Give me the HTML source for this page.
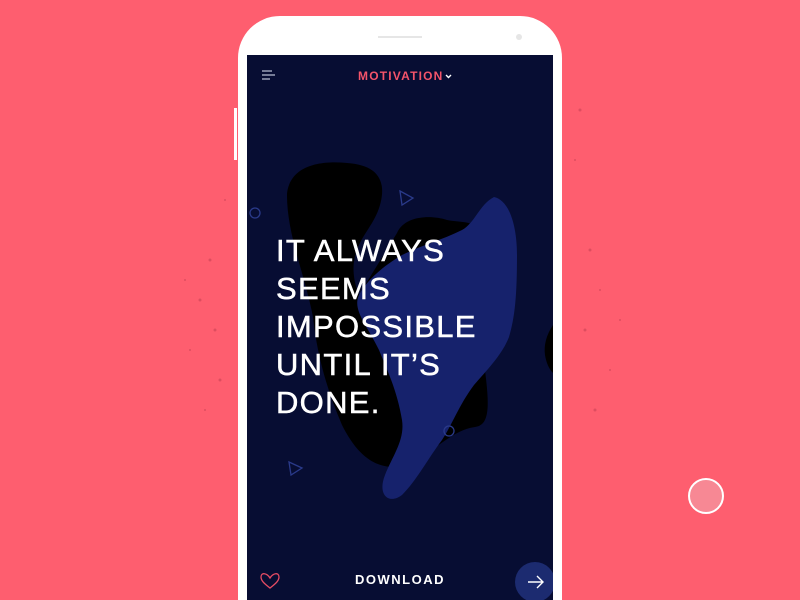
<!DOCTYPE html>
<html style="overflow:hidden"><head><style>
html,body{margin:0;width:800px;height:600px;overflow:hidden}
body{background:#fe5e6f;font-family:"Liberation Sans",sans-serif;position:relative}
.phone{position:absolute;left:238px;top:16px;width:324px;height:584px;background:#fff;border-radius:42px 42px 0 0}
.screen{position:absolute;left:247px;top:55px;width:306px;height:545px;background:#070d33;overflow:hidden}
.q{position:absolute;left:276px;top:232px;color:#fff;font-size:31px;line-height:38px;letter-spacing:1.3px;-webkit-text-stroke:0.5px #fff}
</style></head><body>
<svg width="800" height="600" style="position:absolute;left:0;top:0">
<g fill="#c84356" opacity=".6">
<circle cx="210" cy="260" r="1.5"/><circle cx="200" cy="300" r="1.5"/><circle cx="215" cy="330" r="1.5"/><circle cx="190" cy="350" r="1"/><circle cx="220" cy="380" r="1.5"/><circle cx="205" cy="410" r="1"/><circle cx="185" cy="280" r="1"/><circle cx="225" cy="200" r="1"/>
<circle cx="580" cy="110" r="1.5"/><circle cx="575" cy="160" r="1"/><circle cx="590" cy="250" r="1.5"/><circle cx="600" cy="290" r="1"/><circle cx="585" cy="330" r="1.5"/><circle cx="610" cy="370" r="1"/><circle cx="595" cy="410" r="1.5"/><circle cx="620" cy="320" r="1"/>
</g></svg>
<div class="phone"></div>
<div style="position:absolute;left:378px;top:36px;width:44px;height:2px;background:#e6e6e6"></div>
<div style="position:absolute;left:516px;top:34px;width:6px;height:6px;border-radius:50%;background:#e6e6e6"></div>
<div style="position:absolute;left:234px;top:108px;width:3px;height:52px;background:#fff"></div>
<div class="screen">
<svg width="306" height="545" style="position:absolute;left:0;top:0">
<path d="M40 140 C42 112 70 105 100 108 C130 110 140 125 133 150 C128 168 115 180 110 195 C102 215 110 235 112 240 L150 178 C158 160 185 160 200 165 C215 168 225 165 230 175 C235 200 232 250 236 300 C242 345 245 370 228 372 C205 375 190 395 160 410 C130 418 110 400 95 370 C80 335 70 300 66 262 C58 220 40 180 40 140Z" fill="#000"/>
<path d="M306 270 Q296 285 298 300 Q300 312 306 318Z" fill="#000"/>
<path d="M247 142 C262 145 270 170 270 200 C270 240 268 262 262 282 C255 300 240 315 227 330 C212 350 205 370 195 385 C180 405 170 425 155 440 C142 450 130 440 138 420 C146 400 158 385 155 365 C150 335 140 315 132 295 C120 270 105 255 112 240 C120 225 135 212 155 200 C175 190 195 185 215 175 C228 168 232 150 247 142Z" fill="#16226c"/>
<path d="M153 136 L166 143 L155 150Z" fill="none" stroke="#2a3a8a" stroke-width="1.3"/>
<path d="M42 407 L55 413 L44 420Z" fill="none" stroke="#2a3a8a" stroke-width="1.3"/>
<circle cx="8" cy="158" r="5" fill="none" stroke="#2a3a8a" stroke-width="1.3"/>
<circle cx="202" cy="376" r="5" fill="none" stroke="#2a3a8a" stroke-width="1.3"/>
<g stroke="#9aa0b8" stroke-width="1.5"><line x1="15" y1="16" x2="25" y2="16"/><line x1="15" y1="20" x2="28" y2="20"/><line x1="15" y1="24" x2="23" y2="24"/></g>
<path d="M199 20 L201.5 22.5 L204 20" fill="none" stroke="#fff" stroke-width="1.4"/>
<path d="M23 523 C20 518 14 517 14 522 C14 526 18 529 23 533 C28 529 32 526 32 522 C32 517 26 518 23 523Z" fill="none" stroke="#e44b63" stroke-width="1.3"/>
<circle cx="288" cy="527" r="20" fill="#1c2b70"/>
<path d="M281 527 L296 527 M290 521 L296 527 L290 533" fill="none" stroke="#fff" stroke-width="1.4"/>
</svg>
<div style="position:absolute;left:111px;top:14px;color:#f4546a;font-size:12px;font-weight:bold;letter-spacing:1.2px">MOTIVATION</div>
<div style="position:absolute;left:0;width:306px;top:517px;text-align:center;color:#fff;font-size:13px;font-weight:bold;letter-spacing:1.5px">DOWNLOAD</div>
</div>
<div class="q">IT ALWAYS<br>SEEMS<br>IMPOSSIBLE<br>UNTIL IT’S<br>DONE.</div>
<div style="position:absolute;left:688px;top:478px;width:32px;height:32px;border-radius:50%;background:#f78894;border:2px solid #fff"></div>
</body></html>
